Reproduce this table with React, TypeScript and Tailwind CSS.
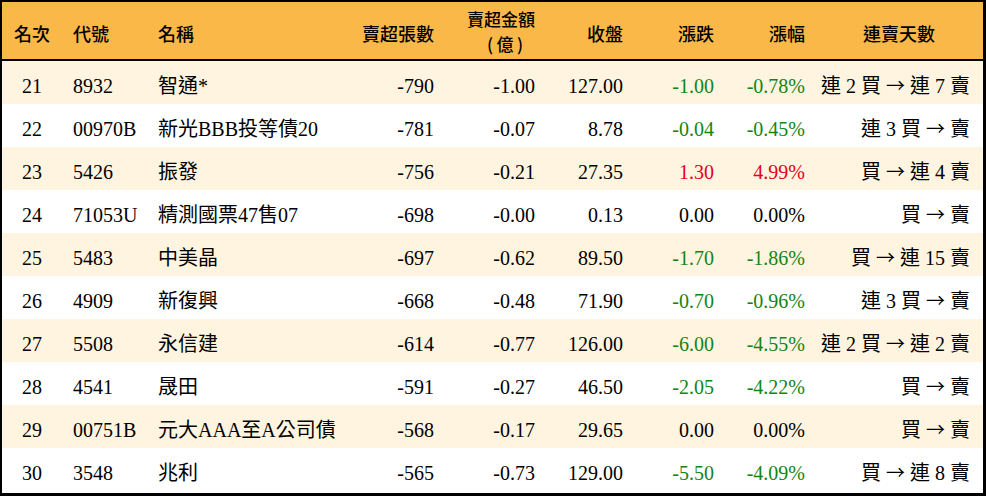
type Row = {
  rank: number;
  code: string;
  name: string;
  lots: string;
  amount: string;
  close: string;
  change: string;
  pct: string;
  streak: string;
};

const rows: Row[] = [
  { rank: 21, code: '8932', name: '智通*', lots: '-790', amount: '-1.00', close: '127.00', change: '-1.00', pct: '-0.78%', streak: '連 2 買 → 連 7 賣' },
  { rank: 22, code: '00970B', name: '新光BBB投等債20', lots: '-781', amount: '-0.07', close: '8.78', change: '-0.04', pct: '-0.45%', streak: '連 3 買 → 賣' },
  { rank: 23, code: '5426', name: '振發', lots: '-756', amount: '-0.21', close: '27.35', change: '1.30', pct: '4.99%', streak: '買 → 連 4 賣' },
  { rank: 24, code: '71053U', name: '精測國票47售07', lots: '-698', amount: '-0.00', close: '0.13', change: '0.00', pct: '0.00%', streak: '買 → 賣' },
  { rank: 25, code: '5483', name: '中美晶', lots: '-697', amount: '-0.62', close: '89.50', change: '-1.70', pct: '-1.86%', streak: '買 → 連 15 賣' },
  { rank: 26, code: '4909', name: '新復興', lots: '-668', amount: '-0.48', close: '71.90', change: '-0.70', pct: '-0.96%', streak: '連 3 買 → 賣' },
  { rank: 27, code: '5508', name: '永信建', lots: '-614', amount: '-0.77', close: '126.00', change: '-6.00', pct: '-4.55%', streak: '連 2 買 → 連 2 賣' },
  { rank: 28, code: '4541', name: '晟田', lots: '-591', amount: '-0.27', close: '46.50', change: '-2.05', pct: '-4.22%', streak: '買 → 賣' },
  { rank: 29, code: '00751B', name: '元大AAA至A公司債', lots: '-568', amount: '-0.17', close: '29.65', change: '0.00', pct: '0.00%', streak: '買 → 賣' },
  { rank: 30, code: '3548', name: '兆利', lots: '-565', amount: '-0.73', close: '129.00', change: '-5.50', pct: '-4.09%', streak: '買 → 連 8 賣' },
];

const cols = 'grid grid-cols-[60px_85px_193px_104px_101px_88px_91px_91px_168px]';
const cjk = { fontFamily: '"Noto Sans CJK TC", "Liberation Serif", sans-serif' };

function tone(v: string) {
  if (v.startsWith('-')) return 'text-[#138513]';
  if (parseFloat(v) > 0) return 'text-[#e3001b]';
  return 'text-black';
}

// arrow drawn in the CJK font so it gets the long full-width shape
function Streak({ text }: { text: string }) {
  const parts = text.split('→');
  return (
    <>
      {parts[0]}
      <span className="text-[19px]" style={cjk}>→</span>
      {parts[1]}
    </>
  );
}

export default function App() {
  return (
    <div
      className="w-[986px] h-[496px] bg-white border-l-2 border-t-2 border-r-[3px] border-b-[3px] border-black text-black text-[20px]"
      style={{ fontFamily: '"Liberation Serif", "Noto Sans CJK TC", serif' }}
    >
      <div
        className={`${cols} h-[59px] pt-[4px] bg-[#fab848] border-b-2 border-black items-center text-[18px] font-medium leading-[22px]`}
        style={cjk}
      >
        <div className="text-center">名次</div>
        <div className="pl-[11px]">代號</div>
        <div className="pl-[11px]">名稱</div>
        <div className="text-right pr-[10px]">賣超張數</div>
        <div className="text-right pr-[10px] text-[17px] leading-[25px] -mt-[4px]">
          <div>賣超金額</div>
          <div className="pr-[12px]">(&thinsp;億&thinsp;)</div>
        </div>
        <div className="text-right pr-[10px]">收盤</div>
        <div className="text-right pr-[10px]">漲跌</div>
        <div className="text-right pr-[10px]">漲幅</div>
        <div className="text-center">連賣天數</div>
      </div>
      {rows.map((r, i) => (
        <div
          key={r.rank}
          className={`${cols} h-[43px] pt-[6px] items-center ${i % 2 === 0 ? 'bg-[#fff4df]' : 'bg-white'}`}
        >
          <div className="text-center">{r.rank}</div>
          <div className="pl-[11px]">{r.code}</div>
          <div className="pl-[11px] whitespace-nowrap">{r.name}</div>
          <div className="text-right pr-[10px]">{r.lots}</div>
          <div className="text-right pr-[10px]">{r.amount}</div>
          <div className="text-right pr-[10px]">{r.close}</div>
          <div className={`text-right pr-[10px] ${tone(r.change)}`}>{r.change}</div>
          <div className={`text-right pr-[10px] ${tone(r.pct)}`}>{r.pct}</div>
          <div className="text-right pr-[13px] whitespace-pre">
            <Streak text={r.streak} />
          </div>
        </div>
      ))}
    </div>
  );
}
